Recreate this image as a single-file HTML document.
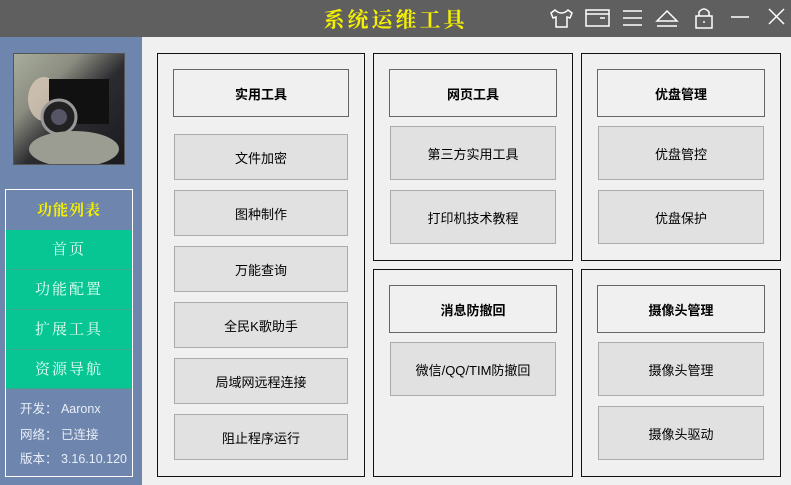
<!DOCTYPE html>
<html><head><meta charset="utf-8"><style>
*{margin:0;padding:0;box-sizing:border-box}
body{width:791px;height:485px;position:relative;background:#f0f0f0;font-family:"Liberation Sans","Noto Sans CJK SC",sans-serif;overflow:hidden}
.a{position:absolute}
.top{left:0;top:0;width:791px;height:37px;background:#5f5f5f}
.title{left:0;width:791px;top:4px;text-align:center;color:#f5f000;font-family:"Noto Serif CJK SC",serif;font-weight:bold;font-size:21px;letter-spacing:3px}
.side{left:0;top:37px;width:142px;height:448px;background:#6e86ad}
.photo{left:13px;top:53px;width:112px;height:112px;border:1px solid #555;background:linear-gradient(135deg,#a9ad9c 0%,#8a8d80 30%,#2c2c30 55%,#1b1b1f 100%)}
.box{left:5px;top:189px;width:128px;height:288px;border:1px solid #fff}
.fl{left:6px;top:190px;width:126px;height:40px;color:#f5f000;font-family:"Noto Serif CJK SC",serif;font-weight:bold;font-size:15px;text-align:center;line-height:40px;letter-spacing:1px}
.nav{left:6px;width:126px;height:40px;background:#08c694;color:#e8fff4;font-family:"Noto Serif CJK SC",serif;font-size:15px;text-align:center;line-height:38px;letter-spacing:2px;border-bottom:1px solid #3aa88a}
.info{left:20px;color:#e8eef8;font-size:12.5px}
.pan{border:1.5px solid #111;background:#f0f0f0}
.hd{border:1.5px solid #666;font-weight:bold;font-size:13px;text-align:center;display:flex;align-items:center;justify-content:center;color:#000}
.bt{border:1px solid #aaa;background:#e1e1e1;font-size:13px;text-align:center;display:flex;align-items:center;justify-content:center;color:#000}
svg{position:absolute}
</style></head><body>
<div class="a top"></div>
<div class="a title">系统运维工具</div>
<svg style="left:548px;top:6px" width="210" height="24" viewBox="0 0 210 24" fill="none" stroke="#fff" stroke-width="1.5">
<path d="M7 4 L3 7 L5 12 L8 11 L8 21 L19 21 L19 11 L22 12 L24 7 L20 4 Q17 7 13.5 7 Q10 7 7 4Z"/>
<rect x="38" y="4" width="23" height="16"/><line x1="38" y1="8" x2="61" y2="8"/><line x1="52" y1="12" x2="57" y2="12"/>
<line x1="75" y1="5" x2="94" y2="5"/><line x1="75" y1="12" x2="94" y2="12"/><line x1="75" y1="19" x2="94" y2="19"/>
<path d="M109 15 L119 5 L129 15 Z"/><line x1="109" y1="20" x2="129" y2="20"/>
<rect x="148" y="10" width="16" height="12"/><path d="M151 10 V6 Q156 0 161 6 V10"/><line x1="156" y1="15" x2="156" y2="17"/>
<line x1="183" y1="11" x2="201" y2="11"/>
</svg>
<svg style="left:767px;top:6px" width="24" height="24" fill="none" stroke="#fff" stroke-width="1.5"><line x1="2" y1="3" x2="17" y2="18"/><line x1="17" y1="3" x2="2" y2="18"/></svg>
<div class="a side"></div>
<div class="a photo"></div>
<svg style="left:14px;top:54px" width="110" height="110"><ellipse cx="30" cy="45" rx="16" ry="22" fill="#d8c8b8" opacity=".8"/><rect x="35" y="25" width="60" height="45" fill="#111"/><circle cx="45" cy="63" r="17" fill="#222" stroke="#999" stroke-width="3"/><circle cx="45" cy="63" r="8" fill="#556"/><ellipse cx="60" cy="95" rx="45" ry="18" fill="#9c9d92"/></svg>
<div class="a box"></div>
<div class="a fl">功能列表</div>
<div class="a nav" style="top:230px">首页</div>
<div class="a nav" style="top:270px">功能配置</div>
<div class="a nav" style="top:310px">扩展工具</div>
<div class="a nav" style="top:350px;height:39px">资源导航</div>
<div class="a info" style="top:398px">开发：&nbsp;Aaronx</div>
<div class="a info" style="top:424px">网络：&nbsp;已连接</div>
<div class="a info" style="top:448px">版本：&nbsp;3.16.10.120</div>

<div class="a pan" style="left:157px;top:53px;width:208px;height:424px"></div>
<div class="a hd" style="left:173px;top:69px;width:176px;height:48px">实用工具</div>
<div class="a bt" style="left:174px;top:134px;width:174px;height:46px">文件加密</div>
<div class="a bt" style="left:174px;top:190px;width:174px;height:46px">图种制作</div>
<div class="a bt" style="left:174px;top:246px;width:174px;height:46px">万能查询</div>
<div class="a bt" style="left:174px;top:302px;width:174px;height:46px">全民K歌助手</div>
<div class="a bt" style="left:174px;top:358px;width:174px;height:46px">局域网远程连接</div>
<div class="a bt" style="left:174px;top:414px;width:174px;height:46px">阻止程序运行</div>

<div class="a pan" style="left:373px;top:53px;width:200px;height:208px"></div>
<div class="a hd" style="left:389px;top:69px;width:168px;height:48px">网页工具</div>
<div class="a bt" style="left:390px;top:126px;width:166px;height:54px">第三方实用工具</div>
<div class="a bt" style="left:390px;top:190px;width:166px;height:54px">打印机技术教程</div>

<div class="a pan" style="left:373px;top:269px;width:200px;height:208px"></div>
<div class="a hd" style="left:389px;top:285px;width:168px;height:48px">消息防撤回</div>
<div class="a bt" style="left:390px;top:342px;width:166px;height:54px">微信/QQ/TIM防撤回</div>

<div class="a pan" style="left:581px;top:53px;width:200px;height:208px"></div>
<div class="a hd" style="left:597px;top:69px;width:168px;height:48px">优盘管理</div>
<div class="a bt" style="left:598px;top:126px;width:166px;height:54px">优盘管控</div>
<div class="a bt" style="left:598px;top:190px;width:166px;height:54px">优盘保护</div>

<div class="a pan" style="left:581px;top:269px;width:200px;height:208px"></div>
<div class="a hd" style="left:597px;top:285px;width:168px;height:48px">摄像头管理</div>
<div class="a bt" style="left:598px;top:342px;width:166px;height:54px">摄像头管理</div>
<div class="a bt" style="left:598px;top:406px;width:166px;height:54px">摄像头驱动</div>
</body></html>
